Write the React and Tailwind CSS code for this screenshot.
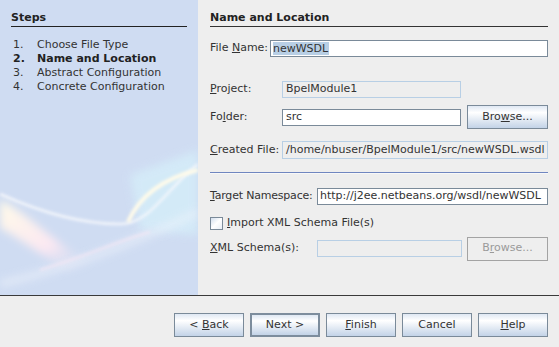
import React from "react";

const font = { fontFamily: '"DejaVu Sans", sans-serif' };

function U({ children }) {
  return <span className="underline underline-offset-1">{children}</span>;
}

function Btn({ children, primary, disabled, w = "w-[70px]" }) {
  if (disabled) {
    return (
      <div className={`${w} h-[24px] flex items-center justify-center border border-[#a3a3a3] bg-[#eeeeee] text-[#9a9a9a]`}>
        <span className="whitespace-pre">{children}</span>
      </div>
    );
  }
  return (
    <div
      className={`${w} h-[24px] flex items-center justify-center text-[#333] bg-gradient-to-b from-[#dfe8f3] via-white via-30% to-[#c3d3e7] ${
        primary ? "border-2 border-[#7d8d9d]" : "border border-[#7a8a99]"
      }`}
    >
      <span className="whitespace-pre">{children}</span>
    </div>
  );
}

function Swoosh() {
  return (
    <svg className="absolute inset-0" width="198" height="295" viewBox="0 0 198 295">
      <defs>
        <filter id="b4" x="-20%" y="-20%" width="140%" height="140%">
          <feGaussianBlur stdDeviation="4" />
        </filter>
        <filter id="b2" x="-20%" y="-20%" width="140%" height="140%">
          <feGaussianBlur stdDeviation="1.5" />
        </filter>
        <linearGradient id="beam" x1="0" y1="0" x2="1" y2="1">
          <stop offset="0" stopColor="#fffbe8" />
          <stop offset="0.6" stopColor="#fbe8f2" />
          <stop offset="1" stopColor="#cfdcf2" stopOpacity="0" />
        </linearGradient>
      </defs>
      <path d="M130 175 L198 150 L198 235 L140 230 Z" fill="#d6f0fa" opacity="0.7" filter="url(#b4)" />
      <path d="M0 200 C30 215 50 240 90 262 L70 270 C40 255 15 235 0 228 Z" fill="url(#beam)" filter="url(#b4)" />
      <path d="M0 194 C40 212 80 224 120 224 C150 224 165 190 198 164" stroke="#f6f8fc" strokeWidth="2.5" fill="none" opacity="0.9" filter="url(#b2)" />
      <path d="M128 222 C140 195 165 178 198 170" stroke="#fffbea" strokeWidth="4" fill="none" filter="url(#b2)" />
      <path d="M0 284 C60 270 120 250 198 212" stroke="#eef3fb" strokeWidth="6" fill="none" opacity="0.7" filter="url(#b4)" />
      <path d="M40 270 C90 255 120 240 150 232" stroke="#f7e8f4" strokeWidth="3" fill="none" opacity="0.6" filter="url(#b2)" />
    </svg>
  );
}

export default function App() {
  return (
    <div className="w-[559px] h-[347px] bg-[#eeeeee] text-[11px] text-[#333] overflow-hidden" style={font}>
      <div className="flex h-[295px]">
        <div className="relative w-[198px] h-full bg-[#cfdcf2] overflow-hidden">
          <Swoosh />
          <div className="relative pt-[11px] px-[11px]">
            <div className="font-bold leading-[14px] pb-[1px] border-b border-[#222] text-[#222]">Steps</div>
            <div className="mt-[11px] leading-[14px]">
              {["Choose File Type", "Name and Location", "Abstract Configuration", "Concrete Configuration"].map((s, i) => (
                <div key={s} className={`flex ${i === 1 ? "font-bold text-[#222]" : ""}`}>
                  <span className="w-[26px] pl-[2px]">{i + 1}.</span>
                  <span>{s}</span>
                </div>
              ))}
            </div>
          </div>
        </div>

        <div className="flex-1 pt-[11px] pl-[12px] pr-[11px]">
          <div className="font-bold leading-[14px] pb-[1px] border-b border-[#333] text-[#222]">Name and Location</div>

          <div className="mt-[13px] flex items-center">
            <span className="w-[60px]">File <U>N</U>ame:</span>
            <div className="flex-1 h-[17px] border border-[#7a8a99] bg-white flex items-center pl-[2px]">
              <span className="bg-[#b8cfe5] leading-[13px] pr-[1px]">newWSDL</span>
            </div>
          </div>

          <div className="mt-[24px] flex items-center">
            <span className="w-[72px]"><U>P</U>roject:</span>
            <div className="w-[179px] h-[17px] border border-[#b8cfe5] flex items-center pl-[3px]">BpelModule1</div>
          </div>

          <div className="mt-[7px] flex items-center gap-[6px]">
            <span className="w-[66px]">Fo<U>l</U>der:</span>
            <div className="flex-1 h-[17px] border border-[#7a8a99] bg-white flex items-center pl-[3px]">src</div>
            <Btn w="w-[81px]">Bro<U>w</U>se...</Btn>
          </div>

          <div className="mt-[12px] flex items-center">
            <span className="w-[72px]"><U>C</U>reated File:</span>
            <div className="flex-1 h-[18px] border border-[#b8cfe5] flex items-center pl-[3px] whitespace-nowrap overflow-hidden">
              /home/nbuser/BpelModule1/src/newWSDL.wsdl
            </div>
          </div>

          <div className="mt-[13px] h-[2px] border-t border-[#7086c0] border-b border-b-[#f8f8f8]" />

          <div className="mt-[14px] flex items-center">
            <span className="w-[107px] whitespace-nowrap tracking-[-0.2px]"><U>T</U>arget Namespace:</span>
            <div className="flex-1 h-[17px] border border-[#7a8a99] bg-white flex items-center pl-[2px] whitespace-nowrap overflow-hidden">
              http://j2ee.netbeans.org/wsdl/newWSDL
            </div>
          </div>

          <div className="mt-[10px] flex items-center gap-[4px]">
            <div className="w-[13px] h-[13px] border border-[#7a8a99] bg-gradient-to-br from-[#d3dfee] via-white to-[#e8eef6]" />
            <span><U>I</U>mport XML Schema File(s)</span>
          </div>

          <div className="mt-[5px] flex items-center gap-[5px]">
            <span className="w-[102px]"><U>X</U>ML Schema(s):</span>
            <div className="flex-1 h-[17px] border border-[#b8cfe5]" />
            <Btn disabled w="w-[81px]">B<U>r</U>owse...</Btn>
          </div>
        </div>
      </div>

      <div className="h-px bg-[#3a3a3a]" />

      <div className="flex justify-end gap-[6px] pt-[17px] pr-[11px]">
        <Btn>&lt; <U>B</U>ack</Btn>
        <Btn primary>Next &gt;</Btn>
        <Btn><U>F</U>inish</Btn>
        <Btn>Cancel</Btn>
        <Btn><U>H</U>elp</Btn>
      </div>
    </div>
  );
}
